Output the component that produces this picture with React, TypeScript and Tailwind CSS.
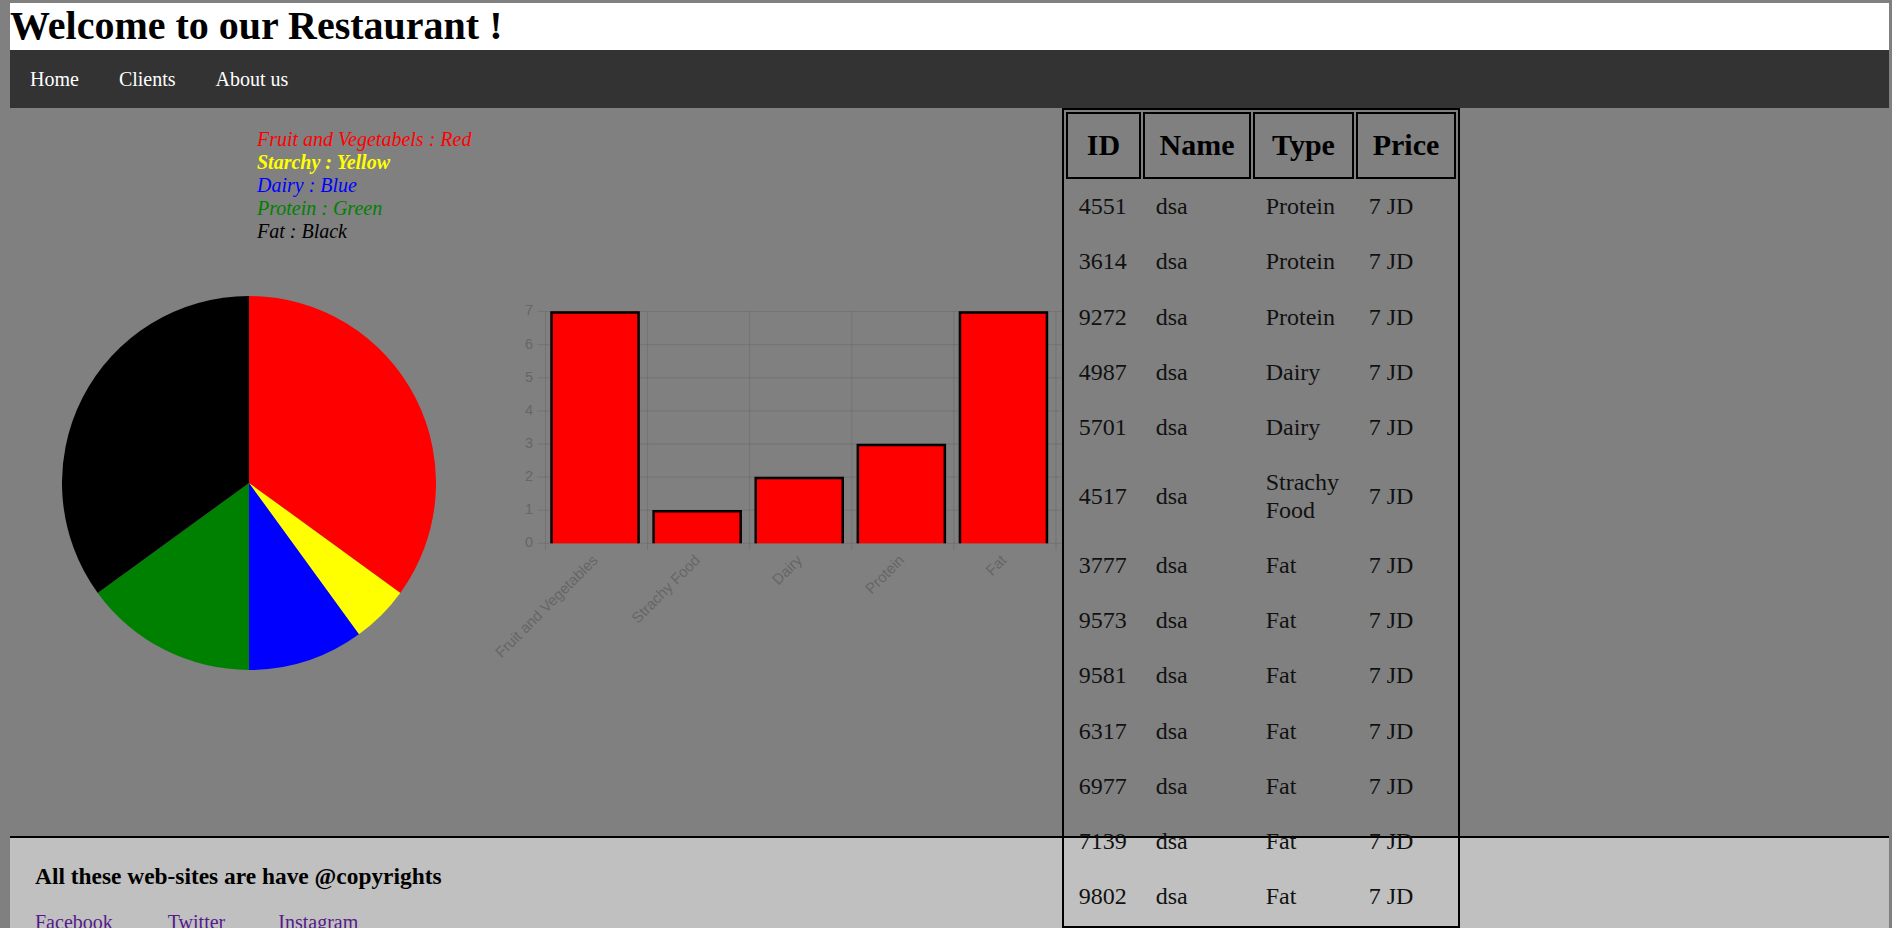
import React from "react";

const pieData = [
    {label: "Fruit and Vegetables", value: 7, color: "#ff0000"},
    {label: "Strachy Food", value: 1, color: "#ffff00"},
    {label: "Dairy", value: 2, color: "#0000ff"},
    {label: "Protein", value: 3, color: "#008000"},
    {label: "Fat", value: 7, color: "#000000"},
];

const rows = [
    {id: 4551, name: "dsa", type: "Protein"},
    {id: 3614, name: "dsa", type: "Protein"},
    {id: 9272, name: "dsa", type: "Protein"},
    {id: 4987, name: "dsa", type: "Dairy"},
    {id: 5701, name: "dsa", type: "Dairy"},
    {id: 4517, name: "dsa", type: "Strachy Food"},
    {id: 3777, name: "dsa", type: "Fat"},
    {id: 9573, name: "dsa", type: "Fat"},
    {id: 9581, name: "dsa", type: "Fat"},
    {id: 6317, name: "dsa", type: "Fat"},
    {id: 6977, name: "dsa", type: "Fat"},
    {id: 7139, name: "dsa", type: "Fat"},
    {id: 9802, name: "dsa", type: "Fat"},
];

const slicePath = (cx: number, cy: number, r: number, a0: number, a1: number) => {
    const rad = (d: number) => (d * Math.PI) / 180;
    const x0 = cx + r * Math.cos(rad(a0));
    const y0 = cy + r * Math.sin(rad(a0));
    const x1 = cx + r * Math.cos(rad(a1));
    const y1 = cy + r * Math.sin(rad(a1));
    const large = a1 - a0 > 180 ? 1 : 0;
    return `M${cx} ${cy} L${x0} ${y0} A${r} ${r} 0 ${large} 1 ${x1} ${y1} Z`;
};

const PieChart = () => {
    const total = pieData.reduce((s, d) => s + d.value, 0);
    let angle = -90;
    return (
        <svg width={374} height={374} viewBox="0 0 374 374" className="ml-[52px] mt-[53.5px] block">
            {pieData.map((d) => {
                const a0 = angle;
                const a1 = angle + (d.value / total) * 360;
                angle = a1;
                return <path key={d.label} d={slicePath(187, 187, 187, a0, a1)} fill={d.color}/>;
            })}
        </svg>
    );
};

const BarChart = () => {
    // local coords: x = page x - 490, y = page y - 108
    const zeroY = 435.3;
    const unit = 33.1;
    const gridX0 = 55.5;
    const step = 102.1;
    const barW = 89;
    const grid = "rgba(0,0,0,0.1)";
    return (
        <svg width={572} height={600} className="block shrink-0" style={{fontFamily: '"Liberation Sans", Arial, sans-serif'}}>
            {[0, 1, 2, 3, 4, 5, 6, 7].map((v) => (
                <g key={v}>
                    <line x1={47.3} x2={572} y1={zeroY - v * unit} y2={zeroY - v * unit} stroke={grid} strokeWidth={1}/>
                    <text x={43} y={zeroY - v * unit} textAnchor="end" dominantBaseline="middle" fontSize={14.5} fill="#666">{v}</text>
                </g>
            ))}
            {[0, 1, 2, 3, 4, 5].map((i) => (
                <line key={i} x1={gridX0 + i * step} x2={gridX0 + i * step} y1={zeroY - 7 * unit} y2={zeroY + 7} stroke={grid} strokeWidth={1}/>
            ))}
            {pieData.map((d, i) => {
                const cx = gridX0 + step * (i + 0.5) - 1.5;
                const left = cx - barW / 2;
                const right = cx + barW / 2;
                const top = zeroY - d.value * unit;
                return (
                    <g key={d.label}>
                        <rect x={left} y={top} width={barW} height={zeroY - top} fill="#ff0000"/>
                        <path d={`M${left + 1} ${zeroY} L${left + 1} ${top + 1} L${right - 1} ${top + 1} L${right - 1} ${zeroY}`} fill="none" stroke="#000" strokeWidth={2.5}/>
                        <text transform={`translate(${cx + 1} ${zeroY + 15}) rotate(-45)`} textAnchor="end" dominantBaseline="middle" fontSize={15} fill="#666">{d.label}</text>
                    </g>
                );
            })}
        </svg>
    );
};

const FoodTable = () => {
    return (
        <table className="relative z-10 table-fixed w-[398px] shrink-0 self-start border-2 border-black border-separate border-spacing-[2px] text-black">
            <thead>
            <tr>
                <th className="w-[75px] border-2 border-black px-0 py-[14px] text-[30px] leading-[34.5px] font-bold">ID</th>
                <th className="w-[108px] border-2 border-black px-0 py-[14px] text-[30px] leading-[34.5px] font-bold">Name</th>
                <th className="w-[101px] border-2 border-black px-0 py-[14px] text-[30px] leading-[34.5px] font-bold">Type</th>
                <th className="w-[100px] border-2 border-black px-0 py-[14px] text-[30px] leading-[34.5px] font-bold">Price</th>
            </tr>
            </thead>
            <tbody>
            {rows.map((row) =>
                <tr key={row.id} className="text-[24px] leading-[27.6px] text-[#111]">
                    <td className="px-[12.7px] py-[12.8px] align-middle text-left">{row.id}</td>
                    <td className="px-[12.7px] py-[12.8px] align-middle text-left">{row.name}</td>
                    <td className="px-[12.7px] py-[12.8px] align-middle text-left">{row.type}</td>
                    <td className="px-[12.7px] py-[12.8px] align-middle text-left">7 JD</td>
                </tr>
            )}
            </tbody>
        </table>
    );
};

const App = () => {
    return (
        <div className="h-[928px] w-full overflow-hidden bg-[#808080] pl-[10px] pr-[3px] pt-[3px] text-[20px] text-black"
             style={{fontFamily: '"Liberation Serif", "Times New Roman", serif'}}>
            <div className="h-[47px] bg-white">
                <h1 className="text-[40px] leading-[46px] font-bold">Welcome to our Restaurant !</h1>
            </div>
            <nav className="flex h-[58px] items-center bg-[#333333]">
                <a className="px-[20px] text-white">Home</a>
                <a className="px-[20px] text-white">Clients</a>
                <a className="px-[20px] text-white">About us</a>
            </nav>
            <main className="flex h-[728px]">
                <div className="w-[480px] shrink-0">
                    <div className="ml-[247px] mt-[19.5px] italic leading-[23px]">
                        <p className="text-[#ff0000]">Fruit and Vegetabels : Red</p>
                        <p className="text-[#ffff00] font-bold">Starchy : Yellow</p>
                        <p className="text-[#0000ff]">Dairy : Blue</p>
                        <p className="text-[#008000]">Protein : Green</p>
                        <p className="text-black">Fat : Black</p>
                    </div>
                    <PieChart/>
                </div>
                <BarChart/>
                <FoodTable/>
            </main>
            <footer className="border-t-2 border-black bg-[#c0c0c0] pl-[25px] pt-[25px] pb-[40px]">
                <h3 className="text-[23.4px] leading-[27px] font-bold">All these web-sites are have @copyrights</h3>
                <div className="mt-[21px] flex leading-[23px]">
                    <a className="mr-[55px] text-[#551a8b]">Facebook</a>
                    <a className="mr-[53px] text-[#551a8b]">Twitter</a>
                    <a className="text-[#551a8b]">Instagram</a>
                </div>
            </footer>
        </div>
    );
};

export default App;
